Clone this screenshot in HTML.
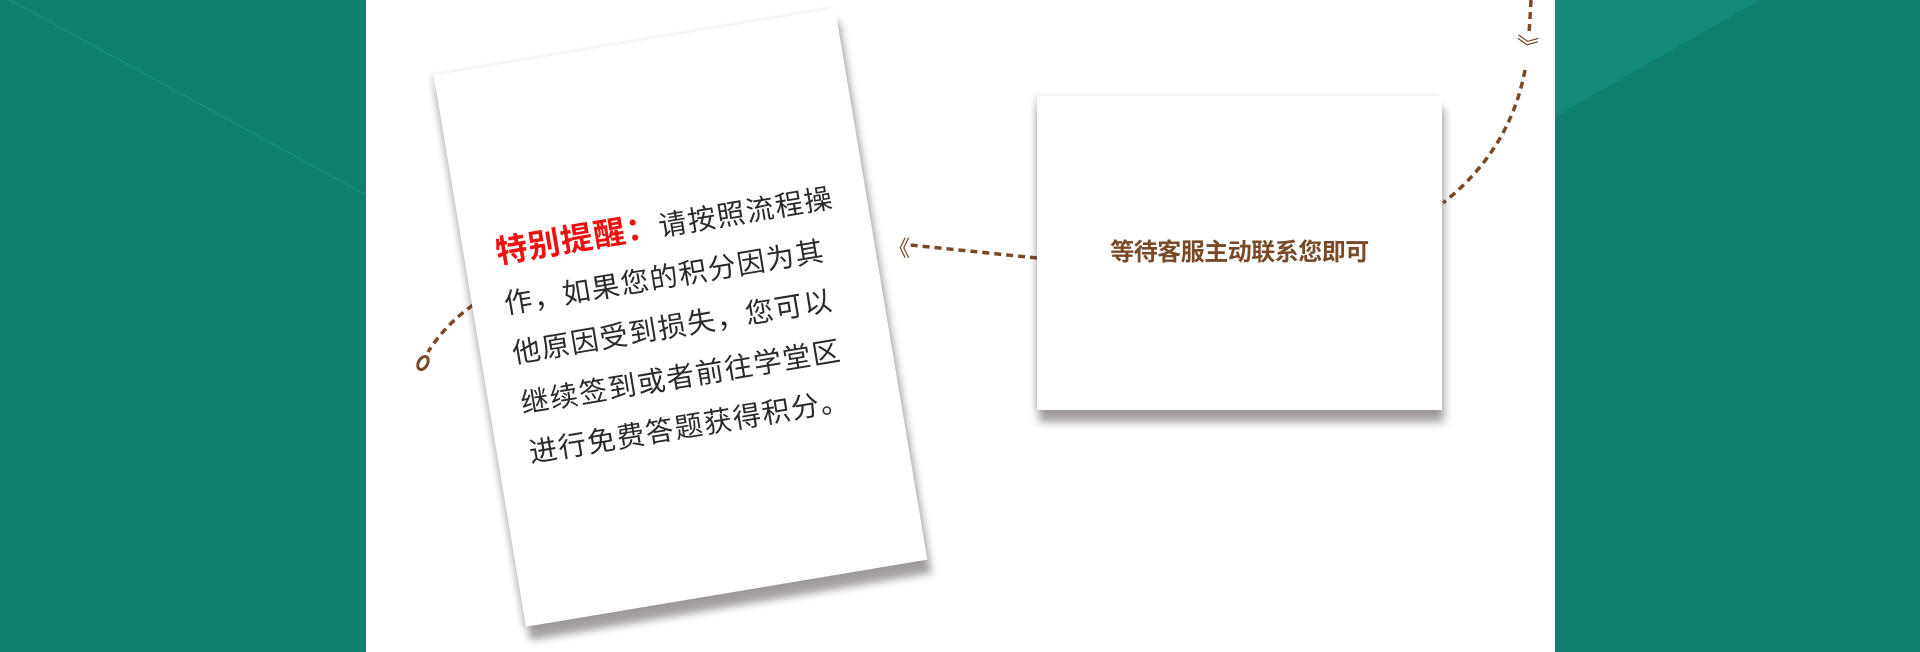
<!DOCTYPE html>
<html><head><meta charset="utf-8"><style>
html,body{margin:0;padding:0;width:1920px;height:652px;overflow:hidden;background:#0f7e6c;position:relative}
.white{position:absolute;left:366px;top:0;width:1189px;height:652px;background:#fff}
.card1{position:absolute;left:477px;top:38px;width:407px;height:559px;background:#fff;transform:rotate(-9.5deg);transform-origin:center;box-shadow:-4px 0 6px rgba(0,0,0,.12),2px 14px 8px rgba(90,80,85,.55)}
.t1{position:absolute;left:32px;top:160px;font-family:"Liberation Sans","Noto Sans CJK SC",sans-serif;font-size:28px;line-height:50.5px;color:#2a2a2a;white-space:nowrap;letter-spacing:1.5px}
.red{color:#ee1111;font-weight:bold;font-size:32px;letter-spacing:1px}
.card2{position:absolute;left:1037px;top:96px;width:405px;height:314px;background:#fff;box-shadow:-3px 0 5px rgba(0,0,0,.12),2px 12px 8px rgba(90,80,85,.55)}
.t2{position:absolute;left:0;width:100%;top:136px;text-align:center;font-family:"Liberation Sans","Noto Sans CJK SC",sans-serif;font-size:24px;font-weight:bold;color:#7a4a28;letter-spacing:-0.5px}
svg{position:absolute;left:0;top:0}
</style></head><body>
<svg width="1920" height="652">
<polygon points="1555,0 1760,0 1555,117" fill="#128a78"/>
<line x1="10" y1="0" x2="366" y2="195" stroke="#15907c" stroke-width="1.5"/>
</svg>
<div class="white"></div>
<svg width="1920" height="652">
<g fill="none" stroke="#7a4a28" stroke-width="3.5" stroke-dasharray="7,5">
<path d="M1531,0 Q1530,20 1529,34"/>
<path d="M1525,70 Q1510,150 1443,203"/>
<path d="M1037,258 L910,245"/>
<path d="M473,305 Q445,325 428,352"/>
</g>
<text x="1516" y="56" font-family="Liberation Sans,Noto Sans CJK SC,sans-serif" font-size="22" fill="#7a4a28" transform="rotate(-80 1526 47)">《</text>
<text x="888" y="256" font-family="Liberation Sans,Noto Sans CJK SC,sans-serif" font-size="22" fill="#7a4a28">《</text>
<ellipse cx="423" cy="363" rx="4.5" ry="7" transform="rotate(30 423 363)" fill="none" stroke="#7a4a28" stroke-width="3"/>
</svg>
<div class="card1"><div class="t1"><span class="red">特别提醒：</span>请按照流程操<br>作，如果您的积分因为其<br>他原因受到损失，您可以<br>继续签到或者前往学堂区<br>进行免费答题获得积分。</div></div>
<div class="card2"><div class="t2">等待客服主动联系您即可</div></div>
</body></html>
